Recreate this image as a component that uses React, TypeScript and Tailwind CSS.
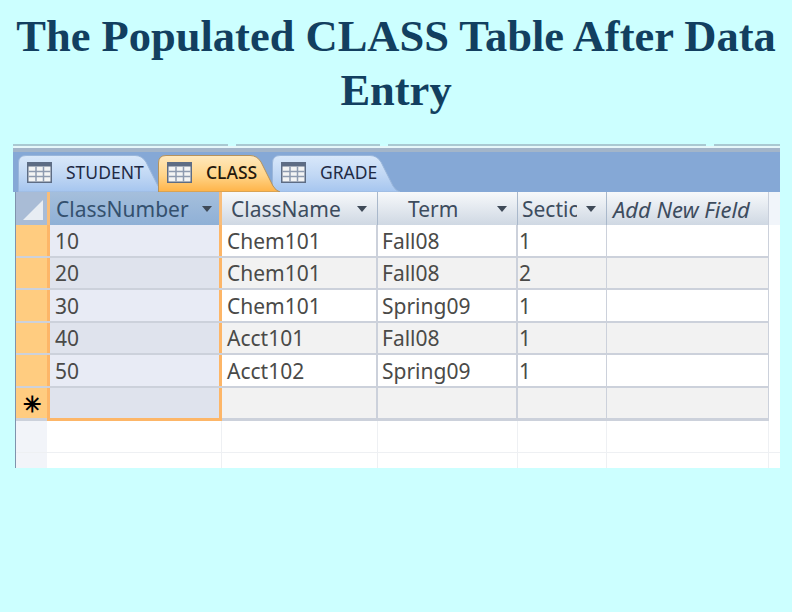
const rows = [
  ["10", "Chem101", "Fall08", "1"],
  ["20", "Chem101", "Fall08", "2"],
  ["30", "Chem101", "Spring09", "1"],
  ["40", "Acct101", "Fall08", "1"],
  ["50", "Acct102", "Spring09", "1"],
];

function TableIcon() {
  return (
    <svg width="25" height="21" viewBox="0 0 25 21" className="shrink-0">
      <rect x="0" y="0" width="25" height="21" fill="#5d6c84" />
      <rect x="1.5" y="4.5" width="22" height="15" fill="#f3f4f4" />
      <path d="M1.5 9.5h22M1.5 14.5h22M9 4.5v15M16.5 4.5v15" stroke="#8e9bb0" strokeWidth="1.5" />
    </svg>
  );
}

function Arrow() {
  return (
    <svg width="10" height="6" viewBox="0 0 10 6" className="shrink-0">
      <path d="M0 0h10L5 6z" fill="#3f4a58" />
    </svg>
  );
}

function Tab({ label, active, w, cls }: { label: string; active?: boolean; w: number; cls: string }) {
  const id = `tab-${label}`;
  return (
    <div className={`relative h-[37px] flex items-center gap-[14px] pl-[9px] pb-[2px] ${cls}`}>
      <svg width={w} height="37" viewBox={`0 0 ${w} 37`} className="absolute left-0 top-0">
        <defs>
          <linearGradient id={id} x1="0" y1="0" x2="0" y2="1">
            <stop offset="0" stopColor={active ? "#ffe9bd" : "#d9e8fa"} />
            <stop offset="0.55" stopColor={active ? "#ffd488" : "#c0d7f4"} />
            <stop offset="1" stopColor={active ? "#ffb347" : "#a5c5ef"} />
          </linearGradient>
        </defs>
        <path
          d={`M0.5 37V8Q0.5 0.5 8 0.5H${w - 30}Q${w - 23} 0.5 ${w - 19} 7L${w - 7} 31Q${w - 4} 36 ${w} 37Z`}
          fill={`url(#${id})`}
          stroke={active ? "#b5925c" : "#9ab6da"}
        />
      </svg>
      <div className="relative">
        <TableIcon />
      </div>
      <span
        className={`relative text-[17.5px] leading-normal ${
          active ? "font-medium text-[#24180c]" : "text-[#1f2a44]"
        }`}
      >
        {label}
      </span>
    </div>
  );
}

function HeaderCell({ label, width, pad, active }: { label: string; width: string; pad: string; active?: boolean }) {
  return (
    <div
      className={`${width} ${pad} h-[33px] shrink-0 flex items-center justify-between ${
        active
          ? "border-x-[3px] border-[#f8bd7a] bg-gradient-to-b from-[#a5bfdc] to-[#8fb0d6] text-[#34506e]"
          : "border-r border-[#a9b8cb] bg-gradient-to-b from-[#f7f9fb] to-[#cfd8e3] text-[#3d4c5e]"
      }`}
    >
      <span className="text-[21px] leading-[28px] whitespace-nowrap">{label}</span>
      <Arrow />
    </div>
  );
}

function Row({ cells, alt }: { cells: string[]; alt: boolean }) {
  return (
    <div className="flex w-[753px] h-[32.5px] border-b-2 border-[#ccd1db]">
      <div className="w-[31px] shrink-0 bg-[#ffcc80]" />
      <div
        className={`w-[175px] shrink-0 border-x-[3px] border-[#fdb668] pl-[5px] pt-[2px] flex items-center ${
          alt ? "bg-[#dfe3ed]" : "bg-[#e8ebf5]"
        }`}
      >
        {cells[0]}
      </div>
      <div className={`flex ${alt ? "bg-[#f2f2f2]" : "bg-white"}`}>
        <div className="w-[156px] shrink-0 pl-[5px] pt-[2px] flex items-center border-r-2 border-[#ccd1db]">{cells[1]}</div>
        <div className="w-[140px] shrink-0 pl-[4px] pt-[2px] flex items-center border-r-2 border-[#ccd1db]">{cells[2]}</div>
        <div className="w-[89px] shrink-0 pl-[1px] pt-[2px] flex items-center border-r border-[#ccd1db]">{cells[3]}</div>
        <div className="w-[162px] shrink-0 border-r border-[#ccd1db]" />
      </div>
    </div>
  );
}

export default function App() {
  return (
    <div className="w-[792px] h-[612px] bg-[#ccffff] overflow-hidden">
      <h1 className="h-[144px] pt-[9px] text-center text-[44.5px] leading-[54px] font-bold text-[#123f60] whitespace-nowrap font-['Liberation_Serif',serif]">
        The Populated CLASS Table After Data
        <br />
        Entry
      </h1>

      <div className="ml-[13px] w-[767px] font-['Noto_Sans',sans-serif] text-[#4a4a48] text-[21px] leading-none">
        <div className="h-[2px] flex gap-[8px]">
          <div className="w-[215px] bg-[#a9c9d2]" />
          <div className="w-[144px] bg-[#a9c9d2]" />
          <div className="w-[318px] bg-[#a9c9d2]" />
          <div className="flex-1 bg-[#a9c9d2]" />
        </div>
        <div className="h-[2px] bg-[#e6f8fa]" />
        <div className="h-[4px] bg-[#a3b5c9]" />

        <div className="h-[40px] bg-[#85a8d6] flex items-end pl-[5px]">
          <Tab label="STUDENT" w={147} cls="w-[140px]" />
          <Tab label="CLASS" active w={122} cls="w-[114px] z-10" />
          <Tab label="GRADE" w={128} cls="w-[128px]" />
        </div>

        <div className="ml-[2px] h-[276px] overflow-hidden border-l border-[#7f93ad] bg-white">
          <div className="flex h-[33px] bg-[#f1f5fa]">
            <div className="w-[31px] h-[33px] shrink-0 bg-[#a9bcd6] flex items-center justify-center">
              <svg width="24" height="24" viewBox="0 0 24 24">
                <path d="M23 3v20H3z" fill="#e8edf3" />
              </svg>
            </div>
            <HeaderCell label="ClassNumber" width="w-[175px]" pad="pl-[6px] pr-[7px]" active />
            <HeaderCell label="ClassName" width="w-[156px]" pad="pl-[9px] pr-[10px]" />
            <HeaderCell label="Term" width="w-[140px]" pad="pl-[30px] pr-[10px]" />
            <div className="w-[89px] h-[33px] shrink-0 pl-[4px] pr-[10px] flex items-center justify-between border-r border-[#a9b8cb] bg-gradient-to-b from-[#f7f9fb] to-[#cfd8e3] text-[#3d4c5e]">
              <span className="w-[55px] text-[21px] leading-[28px] whitespace-nowrap overflow-hidden">Section</span>
              <Arrow />
            </div>
            <div className="w-[162px] h-[33px] shrink-0 pl-[6px] flex items-center bg-gradient-to-b from-[#f7f9fb] to-[#cfd8e3] border-r border-[#c8cfdb] text-[22px] leading-[28px] italic text-[#3d4c5e] whitespace-nowrap">
              Add New Field
            </div>
          </div>

          {rows.map((r, i) => (
            <Row key={r[0]} cells={r} alt={i % 2 === 1} />
          ))}

          {/* new record row */}
          <div className="flex h-[33px]">
            <div className="w-[31px] shrink-0 bg-[#ffcc80] border-b-[3px] border-[#ccd1db] flex items-center justify-center text-[22px] font-bold text-black">
              ✳
            </div>
            <div className="w-[175px] shrink-0 border-x-[3px] border-b-[3px] border-[#fdb668] bg-[#dfe3ed]" />
            <div className="flex bg-[#f2f2f2] border-b-[3px] border-[#ccd1db]">
              <div className="w-[156px] shrink-0 border-r-2 border-[#ccd1db]" />
              <div className="w-[140px] shrink-0 border-r-2 border-[#ccd1db]" />
              <div className="w-[89px] shrink-0 border-r border-[#ccd1db]" />
              <div className="w-[162px] shrink-0 border-r border-[#ccd1db]" />
            </div>
          </div>

          {[0, 1].map((n) => (
            <div key={n} className={`flex h-[32px] ${n === 0 ? "border-b border-[#eef0f3]" : ""}`}>
              <div className="w-[31px] shrink-0 bg-[#f2f4f9]" />
              <div className="w-[175px] shrink-0 border-r border-[#eef0f3]" />
              <div className="w-[156px] shrink-0 border-r border-[#eef0f3]" />
              <div className="w-[140px] shrink-0 border-r border-[#eef0f3]" />
              <div className="w-[89px] shrink-0 border-r border-[#eef0f3]" />
              <div className="w-[162px] shrink-0 border-r border-[#eef0f3]" />
            </div>
          ))}
        </div>
      </div>
    </div>
  );
}
